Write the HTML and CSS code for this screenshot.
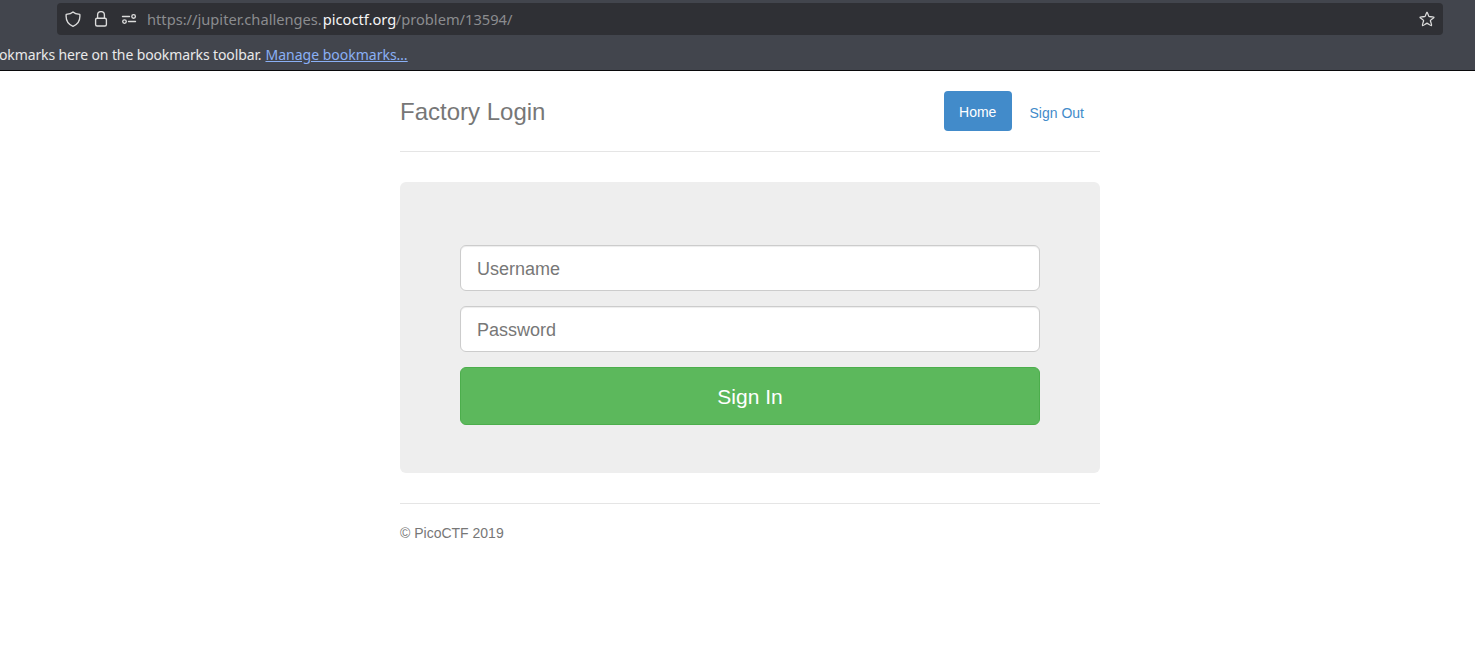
FILE: index.html
```html
<!DOCTYPE html>
<html lang="en">
<head>
<meta charset="utf-8">
<title>Factory Login</title>
<link rel="stylesheet" href="styles.css">
</head>
<body>
<div class="browser">
  <div class="urlbar">
    <svg class="icon" viewBox="0 0 16 16"><path d="M8 .9C6.500 2.300 4 3 1.200 3.400C.7 8 2.500 13 8 15.300C13.500 13 15.300 8 14.800 3.400C12 3 9.500 2.300 8 .9Z"/></svg>
    <svg class="icon" viewBox="0 0 16 16"><rect x="2.600" y="7.200" width="10.800" height="7.800" rx="1.500"/><path d="M4.600 7V4a3.400 3.400 0 0 1 6.800 0v3"/></svg>
    <svg class="icon" viewBox="0 0 16 16"><path d="M1.500 5.500h7M7.500 10.500h7"/><circle cx="12.600" cy="5.400" r="1.800"/><circle cx="3.500" cy="10.600" r="1.800"/></svg>
    <span class="url">https://jupiter.challenges.<b class="domain">picoctf.org</b>/problem/13594/</span>
    <svg class="icon star" viewBox="0 0 16 16"><path d="M8 1.100C8.500 1.100 9.500 5.200 10 5.500C10.500 5.800 14.900 5.600 15 6.300C15.100 6.900 11.500 9 11.400 9.600C11.300 10.200 13.100 14.100 12.500 14.600C11.900 15 8.600 12.200 8 12.200C7.400 12.200 4.100 15 3.500 14.600C2.900 14.100 4.700 10.200 4.600 9.600C4.500 9 .9 6.900 1 6.300C1.100 5.600 5.500 5.800 6 5.500C6.500 5.200 7.500 1.100 8 1.100Z"/></svg>
  </div>
  <div class="bookmarks"><span class="hint">okmarks here on the bookmarks toolbar.</span><a class="manage" href="#">Manage bookmarks…</a></div>
</div>
<main class="container">
  <header class="header">
    <h3 class="title">Factory Login</h3>
    <nav class="nav"><a class="tab active" href="#">Home</a><a class="tab" href="#">Sign Out</a></nav>
  </header>
  <form class="jumbotron">
    <input class="field" type="text" placeholder="Username">
    <input class="field" type="password" placeholder="Password">
    <button class="submit" type="button"><span class="label">Sign In</span></button>
  </form>
  <footer class="footer"><span class="copy">© PicoCTF 2019</span></footer>
</main>
</body>
</html>
```
FILE: styles.css
```css
* { box-sizing: border-box; }
body {
  margin: 0;
  background: #fff;
  color: #777;
  font: 14px/20px "Liberation Sans", Arial, sans-serif;
  overflow: hidden;
}
.browser {
  height: 71px;
  padding-top: 3px;
  background: #42454d;
  border-bottom: 1px solid #09090b;
  font-family: "Noto Sans", sans-serif;
}
.urlbar {
  display: flex;
  align-items: center;
  gap: 12px;
  width: 1386px;
  height: 32px;
  margin-left: 57px;
  padding: 0 8px;
  background: #2f3035;
  border-radius: 4px;
}
.icon {
  width: 16px;
  height: 16px;
  fill: none;
  stroke: #dcdcdc;
  stroke-width: 1.35;
  stroke-linejoin: round;
  stroke-linecap: round;
}
.url { margin-left: -2px; padding-bottom: 1px; font-size: 14.667px; color: #8b8c8f; white-space: nowrap; }
.domain { margin: 0 -.5px 0 1px; font-weight: 400; color: #f5f5f5; }
.star { margin-left: auto; }
.bookmarks { display: flex; gap: 4px; height: 35px; margin-left: -1px; padding-top: 10px; line-height: 20px; color: #e9e9ea; white-space: nowrap; }
.hint { letter-spacing: -.12px; }
.manage { color: #8ab0f5; text-decoration: underline; }
.container { width: 700px; margin-left: 400px; }
.header {
  display: flex;
  justify-content: space-between;
  height: 81px;
  padding-top: 20px;
  border-bottom: 1px solid #e5e5e5;
}
.title { margin: 0; font-size: 24px; font-weight: 400; line-height: 42px; }
.nav { display: flex; gap: 2px; }
.tab { height: 40px; padding: 12px 16px 8px 15.500px; border-radius: 4px; color: #428bca; text-decoration: none; }
.active { width: 68px; padding: 11px 15px 9px; color: #fff; background: #428bca; }
.jumbotron {
  display: flex;
  flex-direction: column;
  height: 291px;
  margin-top: 30px;
  padding: 63px 60px 0;
  background: #eee;
  border-radius: 6px;
}
.field {
  height: 46px;
  margin: 0 0 15px;
  padding: 11px 16px 9px;
  font: 18px/24px "Liberation Sans", Arial, sans-serif;
  background: #fff;
  border: 1px solid #ccc;
  border-radius: 6px;
  box-shadow: inset 0 1px 1px rgba(0, 0, 0, .075);
}
.field::placeholder { color: #777; opacity: 1; }
.submit {
  height: 58px;
  padding: 2px 0 0;
  color: #fff;
  font: 21px/30px "Liberation Sans", Arial, sans-serif;
  background: #5cb85c;
  border: 1px solid #4cae4c;
  border-radius: 6px;
}
.footer { margin-top: 30px; padding-top: 19px; border-top: 1px solid #e5e5e5; }
```
